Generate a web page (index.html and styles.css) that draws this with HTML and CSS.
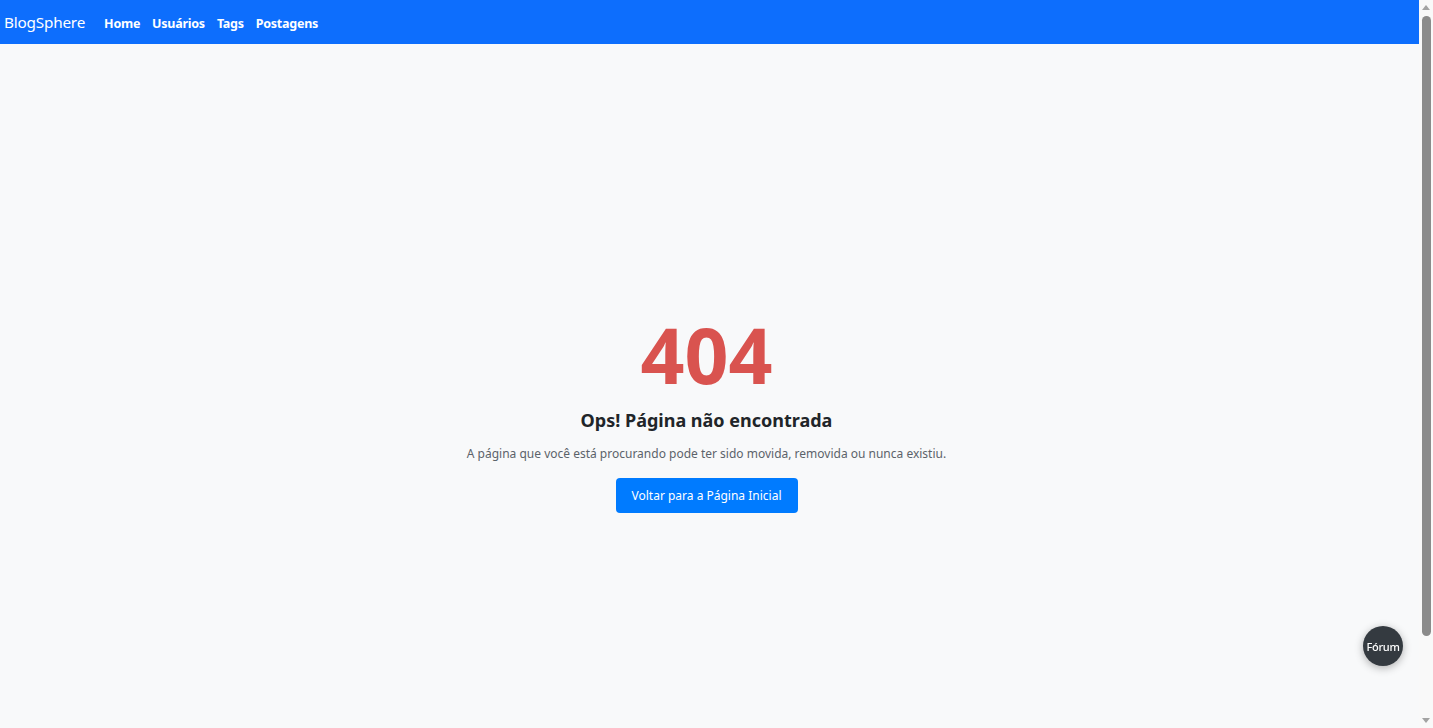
FILE: index.html
```html
<!DOCTYPE html>
<html lang="pt-BR">
<head>
<meta charset="utf-8">
<title>BlogSphere - 404</title>
<link rel="stylesheet" href="styles.css">
</head>
<body>
<nav class="navbar">
  <a class="brand" href="#">BlogSphere</a>
  <ul class="nav-links">
    <li><a href="#">Home</a></li>
    <li><a href="#">Usuários</a></li>
    <li><a href="#">Tags</a></li>
    <li><a href="#">Postagens</a></li>
  </ul>
</nav>
<main class="main">
  <div class="notfound">
    <h1 class="code">404</h1>
    <h2 class="title">Ops! Página não encontrada</h2>
    <p class="desc">A página que você está procurando pode ter sido movida, removida ou nunca existiu.</p>
    <a class="btn" href="#">Voltar para a Página Inicial</a>
  </div>
</main>
<div class="spacer"></div>
<a class="forum" href="#">Fórum</a>
<div class="scrollbar" aria-hidden="true">
  <span class="arrow arrow-up"></span>
  <span class="thumb"></span>
  <span class="arrow arrow-down"></span>
</div>
</body>
</html>
```
FILE: styles.css
```css
* { box-sizing: border-box; }
html, body { margin: 0; padding: 0; }
body {
  font-family: "Noto Sans", "Open Sans", sans-serif;
  background: #f8f9fa;
  color: #212529;
  padding-right: 14px;
}
a { text-decoration: none; }
.navbar {
  height: 44px;
  background: #0d6efd;
  display: flex;
  align-items: center;
  padding: 0 4px;
}
.brand {
  color: #fff;
  font-size: 15.3px;
  margin-right: 19px;
  letter-spacing: -0.2px;
}
.nav-links {
  list-style: none;
  margin: 0;
  padding: 0;
  display: flex;
  gap: 12px;
}
.nav-links a {
  color: #fff;
  font-weight: 700;
  font-size: 12.5px;
  letter-spacing: -0.25px;
}
.main {
  min-height: 728px;
  display: flex;
  align-items: center;
  justify-content: center;
  padding-right: 6px;
}
.notfound {
  text-align: center;
  display: flex;
  flex-direction: column;
  align-items: center;
  padding-top: 6px;
}
.code {
  margin: 0;
  font-size: 77px;
  font-weight: 700;
  line-height: 1.2;
  color: #d9534f;
}
.title {
  margin: 9px 0 13px;
  font-size: 18px;
  font-weight: 700;
  line-height: 1.2;
  color: #212529;
}
.desc {
  margin: 0 0 15px;
  font-size: 12px;
  color: #5c636a;
  line-height: 1.5;
}
.btn {
  display: inline-block;
  background: #007bff;
  color: #fff;
  font-size: 12px;
  padding: 8px 16px;
  border-radius: 4px;
  line-height: 19px;
}
.spacer { height: 45px; }
.forum {
  position: fixed;
  right: 30px;
  bottom: 62px;
  width: 40px;
  height: 40px;
  border-radius: 50%;
  background: #343a40;
  color: #fff;
  font-size: 11px;
  font-weight: 500;
  display: flex;
  align-items: center;
  justify-content: center;
  box-shadow: 0 2px 8px rgba(0,0,0,0.3);
  letter-spacing: -0.3px;
}
.scrollbar {
  position: fixed;
  top: 0;
  right: 0;
  width: 14px;
  height: 100vh;
  background: #f9f9f9;
  display: flex;
  flex-direction: column;
  align-items: center;
}
.arrow {
  width: 0;
  height: 0;
  border-left: 4px solid transparent;
  border-right: 4px solid transparent;
}
.arrow-up {
  margin-top: 5px;
  border-bottom: 5px solid #a3a3a3;
}
.arrow-down {
  margin-top: auto;
  margin-bottom: 5px;
  border-top: 5px solid #a3a3a3;
}
.thumb {
  margin-top: 6px;
  width: 9px;
  height: 620px;
  background: #8b8b8b;
  border-radius: 5px;
}
```
